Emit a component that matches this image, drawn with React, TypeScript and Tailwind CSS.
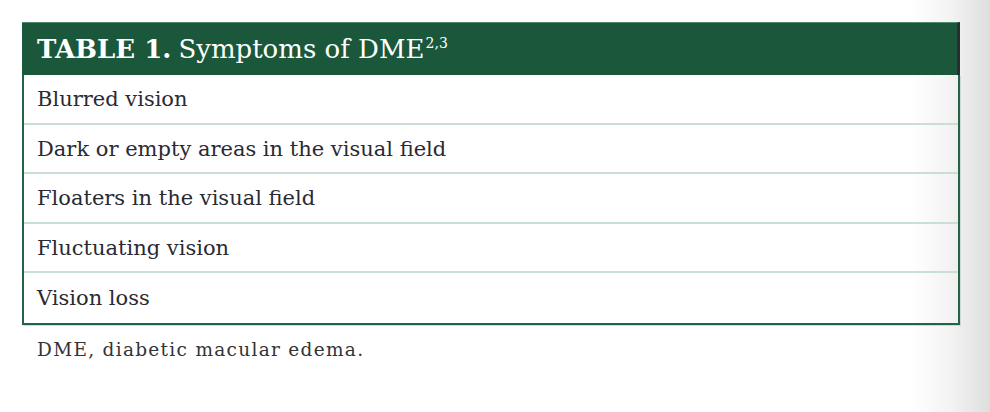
const rows = [
  "Blurred vision",
  "Dark or empty areas in the visual field",
  "Floaters in the visual field",
  "Fluctuating vision",
  "Vision loss",
];

export default function App() {
  return (
    <div className="w-[990px] h-[412px] bg-[linear-gradient(to_right,#ffffff_0%,#ffffff_92%,#f3f3f3_96%,#dedede_100%)] pt-[22px] pl-[22px] font-['DejaVu_Serif',serif]">
      <div className="w-[938px]">
        <div className="h-[53px] bg-[#1a573b] border-t border-[#4f8a6c] border-r-[3px] border-r-[#2a2d33] flex items-center pl-[15px] text-white text-[26px] leading-none">
          <span className="font-bold">TABLE 1.</span>
          <span className="ml-[7px]">Symptoms of DME</span>
          <sup className="text-[14px] -top-[6px] ml-[1px]">2,3</sup>
        </div>
        <div className="border-l-2 border-r-2 border-b-2 border-[#236446] shadow-[1px_1px_0_#c9dbd2]">
          {rows.map((r, i) => (
            <div
              key={r}
              className={
                "h-[49.5px] flex items-center pl-[13px] pt-[2px] text-[21px] text-[#2a2a33] " +
                (i < rows.length - 1 ? "border-b-2 border-[#c7dfd4]" : "")
              }
            >
              {r}
            </div>
          ))}
        </div>
        <p className="mt-[11px] pl-[15px] text-[18.5px] tracking-[1.3px] text-[#333338]">
          DME, diabetic macular edema.
        </p>
      </div>
    </div>
  );
}
